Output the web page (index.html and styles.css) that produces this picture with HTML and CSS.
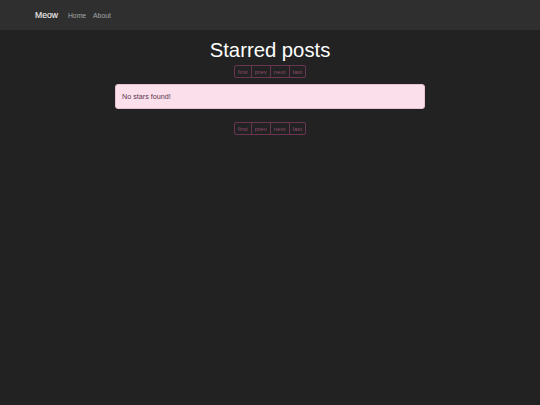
FILE: index.html
```html
<!DOCTYPE html>
<html>
<head>
<meta charset="utf-8">
<link rel="stylesheet" href="styles.css">
</head>
<body>
<nav class="navbar">
  <span class="brand">Meow</span>
  <span class="nav-link">Home</span>
  <span class="nav-link">About</span>
</nav>
<main class="container">
  <h1 class="title">Starred posts</h1>
  <div class="pager">
    <span>first</span><span>prev</span><span>next</span><span>last</span>
  </div>
  <div class="alert">No stars found!</div>
  <div class="pager pager-bottom">
    <span>first</span><span>prev</span><span>next</span><span>last</span>
  </div>
</main>
</body>
</html>
```
FILE: styles.css
```css
html, body {
  margin: 0;
  padding: 0;
  background: #222222;
  font-family: "Liberation Sans", Arial, sans-serif;
  height: 100%;
}
.navbar {
  height: 30px;
  background: #2f2f2f;
  display: flex;
  align-items: center;
  padding-left: 35px;
  box-sizing: border-box;
}
.brand {
  color: #f2f2f2;
  font-size: 8.6px;
  margin-right: 10px;
  -webkit-text-stroke: 0.1px #f2f2f2;
}
.nav-link {
  color: #a6a6a6;
  font-size: 6.8px;
  margin-right: 7px;
}
.container {
  width: 310px;
  margin: 0 auto;
  display: flex;
  flex-direction: column;
  align-items: center;
}
.title {
  color: #ffffff;
  font-weight: normal;
  font-size: 20.3px;
  margin: 8px 0 0;
  line-height: 24px;
}
.pager {
  display: flex;
  margin-top: 2.5px;
  border: 1px solid #6a3550;
  border-radius: 2px;
}
.pager span {
  color: #8c4a6c;
  font-size: 6.2px;
  line-height: 11px;
  height: 11px;
  padding: 0 3px;
  border-left: 1px solid #6a3550;
}
.pager span:first-child { border-left: none; }
.alert {
  align-self: stretch;
  margin-top: 6px;
  background: #fbdfeb;
  color: #5e3550;
  border: 1px solid #e9c3d4;
  border-radius: 3px;
  font-size: 7.2px;
  height: 25px;
  box-sizing: border-box;
  padding: 0 6px;
  display: flex;
  align-items: center;
}
.pager-bottom { margin-top: 13px; }
```
